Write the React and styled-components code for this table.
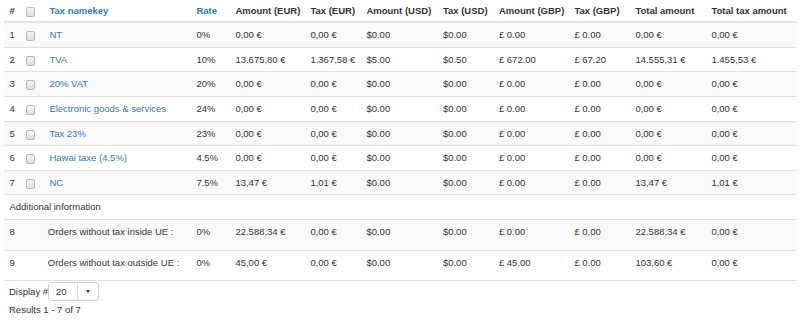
import React from "react";
import styled, { createGlobalStyle } from "styled-components";

const GlobalStyle = createGlobalStyle`
  html, body { margin: 0; padding: 0; background: #fff; }
  body {
    font-family: "Liberation Sans", Arial, Helvetica, sans-serif;
    font-size: 9.5px;
    line-height: 13.6px;
    color: #333;
  }
`;

const Page = styled.div`
  padding: 0 3px 0 4px;
`;

const Table = styled.table`
  width: 793px;
  table-layout: fixed;
  border-collapse: collapse;
  border-spacing: 0;
  margin-bottom: 1px;

  tbody tr:nth-child(odd) { background: #f9f9f9; }
`;

const HeadCell = styled.th`
  text-align: left;
  font-weight: bold;
  color: ${(p) => (p.$link ? "#337ab7" : "#333")};
  padding: 3.6px 5.4px 4px;
  border-bottom: 2px solid #e3e3e3;
  white-space: nowrap;
  vertical-align: middle;
`;

const Cell = styled.td`
  padding: ${(p) => (p.$tall ? "5.5px 5.4px 10.5px" : "5px 5.4px")};
  padding-left: ${(p) => p.$padLeft || "5.4px"};
  border-top: 1px solid #e1e1e1;
  white-space: nowrap;
  vertical-align: ${(p) => (p.$tall ? "top" : "middle")};
`;

const LastRow = styled.tr`
  border-bottom: 1px solid #e1e1e1;
`;

const NameLink = styled.a`
  color: #337ab7;
  text-decoration: none;
`;

const Check = styled.span`
  display: inline-block;
  width: 7px;
  height: 8px;
  margin-top: 1px;
  border: 1px solid #b9b9b9;
  border-radius: 2px;
  background: linear-gradient(#f4f4f4, #dedede);
  vertical-align: middle;
`;

const Footer = styled.div`
  padding-left: 5px;
`;

const DisplayLine = styled.div`
  display: flex;
  align-items: center;
  height: 19px;
`;

const SelectBox = styled.div`
  display: flex;
  align-items: stretch;
  width: 51px;
  height: 19px;
  box-sizing: border-box;
  border: 1px solid #cfcfcf;
  border-radius: 3px;
  background: #fff;
`;

const SelectValue = styled.span`
  flex: 1;
  display: flex;
  align-items: center;
  padding-left: 7px;
  color: #333;
`;

const SelectToggle = styled.span`
  width: 20px;
  display: flex;
  align-items: center;
  justify-content: center;
  border-left: 1px solid #dcdcdc;
`;

const Caret = styled.span`
  width: 0;
  height: 0;
  border-left: 2.5px solid transparent;
  border-right: 2.5px solid transparent;
  border-top: 3px solid #333;
`;

const Results = styled.div`
  margin-top: 1.5px;
`;

const widths = [17, 23, 147, 39, 75, 56, 76.5, 56, 75.5, 61, 76, 91];

const headers = [
  { t: "#" },
  { t: null },
  { t: "Tax namekey", link: true },
  { t: "Rate", link: true },
  { t: "Amount (EUR)" },
  { t: "Tax (EUR)" },
  { t: "Amount (USD)" },
  { t: "Tax (USD)" },
  { t: "Amount (GBP)" },
  { t: "Tax (GBP)" },
  { t: "Total amount" },
  { t: "Total tax amount" },
];

const zeros = ["0,00 €", "0,00 €", "$0.00", "$0.00", "£ 0.00", "£ 0.00", "0,00 €", "0,00 €"];

const taxes = [
  ["1", "NT", "0%", zeros],
  ["2", "TVA", "10%", ["13.675,80 €", "1.367,58 €", "$5.00", "$0.50", "£ 672.00", "£ 67.20", "14.555,31 €", "1.455,53 €"]],
  ["3", "20% VAT", "20%", zeros],
  ["4", "Electronic goods & services", "24%", zeros],
  ["5", "Tax 23%", "23%", zeros],
  ["6", "Hawai taxe (4.5%)", "4.5%", zeros],
  ["7", "NC", "7.5%", ["13,47 €", "1,01 €", "$0.00", "$0.00", "£ 0.00", "£ 0.00", "13,47 €", "1,01 €"]],
];

const extra = [
  ["8", "Orders without tax inside UE :", "0%", ["22.588,34 €", "0,00 €", "$0.00", "$0.00", "£ 0.00", "£ 0.00", "22.588,34 €", "0,00 €"]],
  ["9", "Orders without tax outside UE :", "0%", ["45,00 €", "0,00 €", "$0.00", "$0.00", "£ 45.00", "£ 0.00", "103,60 €", "0,00 €"]],
];

export default function App() {
  return (
    <Page>
      <GlobalStyle />
      <Table>
        <colgroup>
          {widths.map((w, i) => (
            <col key={i} style={{ width: w }} />
          ))}
        </colgroup>
        <thead>
          <tr>
            {headers.map((h, i) => (
              <HeadCell key={i} $link={h.link}>
                {h.t === null ? <Check /> : h.t}
              </HeadCell>
            ))}
          </tr>
        </thead>
        <tbody>
          {taxes.map(([n, name, rate, vals]) => (
            <tr key={n}>
              <Cell>{n}</Cell>
              <Cell>
                <Check />
              </Cell>
              <Cell>
                <NameLink href="#">{name}</NameLink>
              </Cell>
              <Cell>{rate}</Cell>
              {vals.map((v, i) => (
                <Cell key={i}>{v}</Cell>
              ))}
            </tr>
          ))}
          <tr>
            <Cell colSpan={12}>Additional information</Cell>
          </tr>
          {extra.map(([n, label, rate, vals], idx) => {
            const Row = idx === extra.length - 1 ? LastRow : "tr";
            return (
              <Row key={n}>
                <Cell $tall colSpan={2}>{n}</Cell>
                <Cell $tall $padLeft="3.8px">{label}</Cell>
                <Cell $tall>{rate}</Cell>
                {vals.map((v, i) => (
                  <Cell $tall key={i}>{v}</Cell>
                ))}
              </Row>
            );
          })}
        </tbody>
      </Table>
      <Footer>
        <DisplayLine>
          <span>Display #</span>
          <SelectBox>
            <SelectValue>20</SelectValue>
            <SelectToggle>
              <Caret />
            </SelectToggle>
          </SelectBox>
        </DisplayLine>
        <Results>Results 1 - 7 of 7</Results>
      </Footer>
    </Page>
  );
}
